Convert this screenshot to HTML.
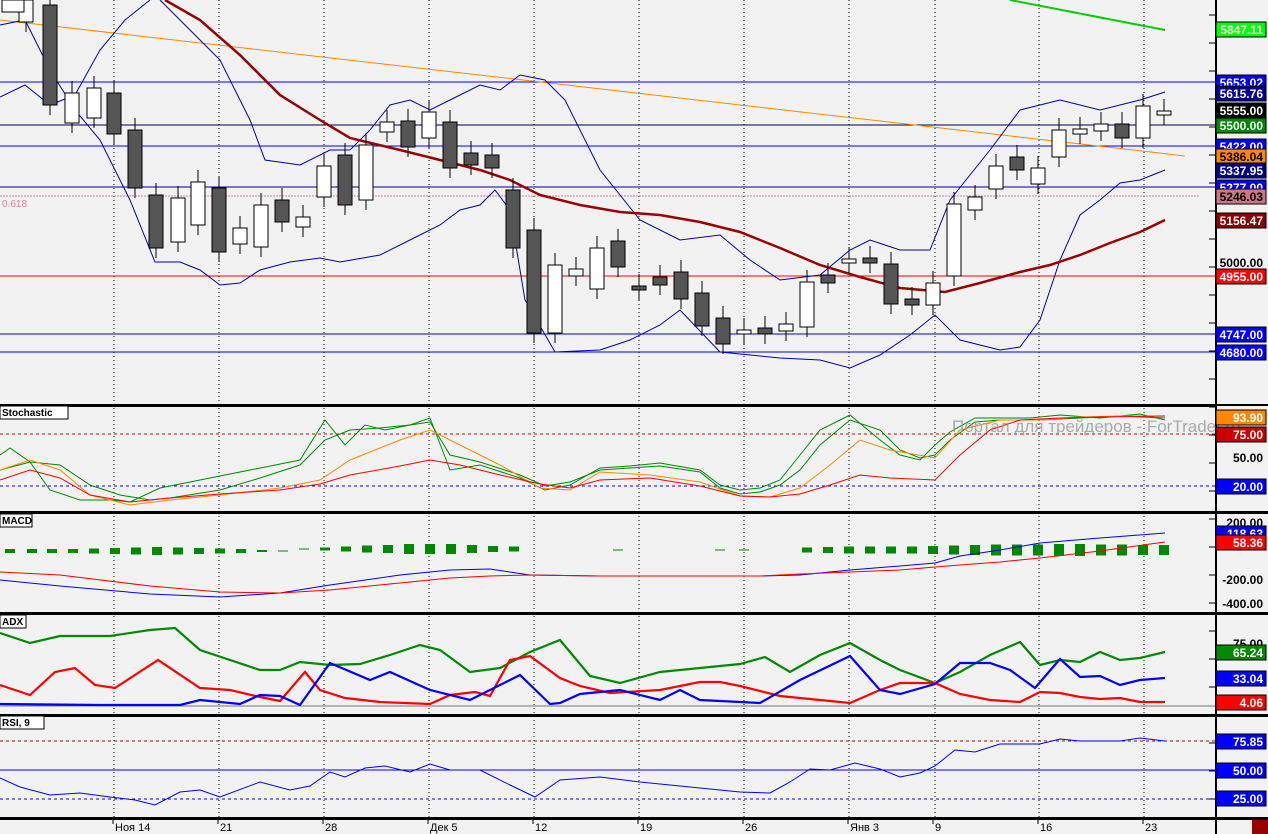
<!DOCTYPE html>
<html><head><meta charset="utf-8"><style>
body{margin:0;background:#f2f2f2;}
svg{display:block;font-family:"Liberation Sans",sans-serif;}
.l{font:bold 12px "Liberation Sans",sans-serif;fill:#fff;}
.k{font:bold 12px "Liberation Sans",sans-serif;fill:#000;}
</style></head><body>
<svg id="s" width="1268" height="834" xmlns="http://www.w3.org/2000/svg"></svg>
<script>
var o='';
function P(pts,c,w,d){o+='<polyline fill="none" stroke="'+c+'" stroke-width="'+(w||1)+'"'+(d?' stroke-dasharray="'+d+'"':'')+' points="'+pts+'"/>';}
function L(x1,y1,x2,y2,c,w,d){o+='<line x1="'+x1+'" y1="'+y1+'" x2="'+x2+'" y2="'+y2+'" stroke="'+c+'" stroke-width="'+(w||1)+'"'+(d?' stroke-dasharray="'+d+'"':'')+'/>';}
function R(x,y,w,h,f,s){o+='<rect x="'+x+'" y="'+y+'" width="'+w+'" height="'+h+'" fill="'+f+'"'+(s?' stroke="'+s+'"':'')+'/>';}
function T(x,y,t,c,cls){o+='<text x="'+x+'" y="'+y+'" class="'+(cls||'l')+'"'+(c?' style="fill:'+c+'"':'')+'>'+t+'</text>';}
function lab(y,t,bg,fg){R(1216,y-8,50,15,bg,'#000');o+='<text x="1263" y="'+(y+4)+'" text-anchor="end" class="l"'+(fg?' style="fill:'+fg+'"':'')+'>'+t+'</text>';}
function num(y,t){o+='<text x="1263" y="'+(y+4)+'" text-anchor="end" class="k">'+t+'</text>';}
R(0,0,1268,834,'#f2f2f2');
var vx=[114,219,324,429,534,639,744,849,935,1039,1144];
vx.forEach(function(x){L(x,0,x,818,'#000',1,'1 3');});
L(0,82,1215,82,'#00f');L(0,125,1215,125,'#004');L(0,146,1215,146,'#00f');L(0,187,1215,187,'#008');
L(0,196,1200,196,'#e08090',1,'2 1');L(0,276,1215,276,'#f00');L(0,334,1215,334,'#00f');L(0,352,1215,352,'#00f');
o+='<text x="2" y="207" style="fill:#e08090;font-size:10px">0.618</text>';
L(0,20,1185,156,'#f80');L(1010,0,1165,30,'#0c0',2);
P('0,97 25,85 50,105 75,95 100,50 125,20 150,0','#00a');
P('160,0 190,30 220,60 250,120 265,160 300,165 330,150 350,150 370,130 390,105 410,100 430,110 450,100 480,85 500,90 520,75 545,80 565,100 600,170 640,220 680,240 720,235 750,260 780,280 820,275 850,250 870,240 900,250 930,250 950,200 990,150 1020,110 1060,100 1100,110 1140,100 1165,92','#00a');
P('0,25 25,20 50,70 75,110 100,140 130,200 155,262 180,262 200,270 220,285 240,283 260,270 290,262 320,258 340,262 380,255 410,240 440,225 460,210 480,205 495,190 510,210 525,300 555,352 600,350 630,340 660,325 680,310 720,352 780,358 820,360 850,368 880,355 910,335 935,315 960,340 980,345 1000,350 1020,347 1040,320 1060,260 1080,215 1100,200 1120,183 1140,180 1165,170','#00a');
P('165,0 200,20 240,55 280,95 320,120 350,138 400,150 440,160 480,170 510,180 540,195 580,205 620,212 660,215 700,222 740,232 780,248 820,265 860,277 900,288 945,292 980,283 1020,272 1050,265 1080,255 1110,243 1140,232 1165,220','#900',2.5);
var c=[[26,0,22,0],[50,5,105,1],[72,93,123,0],[94,88,118,0],[114,93,134,1],[135,130,188,1],[156,195,248,1],[178,198,242,0],[198,182,225,0],[219,188,252,1],[240,228,244,0],[261,205,247,0],[282,200,222,1],[303,217,227,0],[324,166,197,0],[345,155,205,1],[366,145,200,0],[387,122,132,0],[408,121,147,1],[429,112,138,0],[450,122,168,1],[471,153,165,1],[492,155,168,1],[513,190,248,1],[534,230,333,1],[555,265,333,0],[576,269,276,0],[597,248,289,0],[618,241,267,1],[639,286,290,1],[660,277,285,1],[681,272,299,1],[702,293,326,1],[723,318,344,1],[744,330,334,0],[765,328,334,1],[786,324,331,0],[807,282,327,0],[828,275,283,1],[849,259,263,0],[870,258,263,1],[891,264,304,1],[912,299,305,1],[933,283,305,0],[954,204,276,0],[975,197,210,0],[996,166,189,0],[1017,157,170,1],[1038,168,184,0],[1059,130,157,0],[1080,129,134,0],[1101,124,131,0],[1122,124,138,1],[1143,106,138,0],[1164,111,115,0]];
c.forEach(function(k){L(k[0],k[1]-12,k[0],k[2]+10,'#000');R(k[0]-7,k[1],14,Math.max(2,k[2]-k[1]),k[3]?'#555':'#fff','#000');});
[405,512,613,715,818].forEach(function(y){R(0,y-1,1268,3,'#000');});
R(1215,0,2,834,'#000');
L(0,434,1215,434,'#d00',1,'3 3');L(0,486,1215,486,'#00f',1,'3 3');
P('0,455 10,448 30,462 50,490 80,500 110,500 130,502 160,488 200,480 250,470 300,460 325,420 345,445 365,425 385,430 410,425 430,418 450,470 480,465 520,478 545,490 570,485 600,468 630,466 660,463 700,470 720,485 740,490 760,488 780,480 800,455 820,430 850,415 880,440 900,455 920,460 935,445 950,432 975,418 1000,418 1030,418 1060,415 1100,418 1140,414 1165,420','#080');
P('0,470 30,462 60,465 90,485 120,495 150,500 170,498 220,490 260,478 300,465 325,440 350,430 380,428 410,425 430,422 450,455 480,462 520,475 545,486 570,482 600,470 630,468 660,466 700,472 720,488 740,494 760,492 780,485 800,470 820,445 850,420 880,430 900,450 920,458 935,455 950,440 975,422 1000,420 1040,420 1080,418 1120,416 1165,418','#080');
P('0,470 30,460 60,470 90,495 130,505 170,500 220,495 280,488 320,480 350,460 400,440 430,430 460,445 500,465 540,488 570,490 600,472 650,475 700,482 740,496 770,497 800,488 830,465 860,440 890,450 935,458 960,430 1000,420 1040,420 1080,417 1120,416 1165,416','#f80');
P('0,480 30,470 60,478 90,495 130,502 170,498 220,494 280,490 320,484 350,475 400,466 430,460 460,465 500,475 540,484 570,488 600,480 650,478 700,486 740,496 770,497 800,494 830,485 860,475 890,478 935,480 960,455 990,430 1020,420 1060,418 1100,417 1165,416','#f00');
o+='<text x="952" y="432" style="font-size:17px;fill:#999;opacity:.8">Портал для трейдеров - ForTrader.ru</text>';
R(1217,406,51,6,'#f2f2f2');
var bx=[10,32,52,73,94,115,136,157,178,199,220,241,262,283,304,325,346,367,388,409,430,451,472,493,514];
var bh=[4,4,4,4,5,6,7,8,7,6,5,4,2,1,1,3,5,7,8,10,10,10,8,6,5];
bx.forEach(function(x,i){R(x-5,551-bh[i]/2+ (i<14?0:-2),10,bh[i],'#080');});
[[618,1],[720,1],[744,1],[807,5],[828,6],[849,7],[870,7],[891,7],[912,7],[933,8],[954,9],[975,10],[996,11],[1017,11],[1038,11],[1059,12],[1080,12],[1101,11],[1122,11],[1143,10],[1164,10]].forEach(function(b){R(b[0]-5,546-b[1]/2+4,10,b[1],'#080');});
P('0,580 60,586 150,594 220,597 280,593 330,585 400,575 450,570 490,569 530,575 600,576 680,576 760,576 800,575 850,570 900,566 935,563 960,556 1000,550 1040,543 1100,538 1165,533','#00f');
P('0,572 60,575 150,586 220,592 280,593 330,590 400,583 450,578 490,576 530,575 600,576 680,576 760,576 800,574 850,572 900,570 935,567 960,565 1000,562 1040,558 1100,551 1165,542','#f00');
L(0,706,1215,706,'#777');
P('0,633 30,643 60,636 110,636 150,630 175,628 200,650 230,660 260,670 280,670 300,662 330,665 360,664 390,655 420,645 440,650 470,672 500,668 530,652 560,640 590,676 620,683 660,672 700,668 740,664 765,657 790,672 820,655 850,643 880,660 900,670 935,683 960,672 990,655 1020,642 1040,665 1060,660 1080,662 1100,652 1120,660 1140,658 1165,652','#080',2.2);
P('0,685 30,695 55,672 75,668 95,685 115,688 158,660 200,688 230,690 260,697 280,701 305,672 320,690 345,698 380,702 430,704 450,695 475,692 490,696 510,660 530,656 560,678 580,686 610,693 660,690 700,682 720,682 740,686 780,696 820,700 850,703 880,690 900,683 935,683 960,694 990,700 1020,702 1040,692 1060,693 1080,697 1100,699 1120,698 1140,702 1165,702','#f00',2.2);
P('0,704 100,705 180,705 200,700 240,704 260,695 280,696 300,705 330,663 370,680 390,672 430,690 470,700 520,675 550,704 560,703 580,694 620,690 660,700 680,690 700,700 760,703 800,680 850,656 880,690 900,694 935,684 960,663 990,663 1010,670 1035,688 1060,659 1080,677 1100,676 1120,685 1140,680 1165,678','#00f',2.2);
L(0,741,1215,741,'#b00',1,'3 3');L(0,770,1215,770,'#00f');L(0,799,1215,799,'#00f',1,'3 3');
P('0,778 20,787 50,795 80,793 110,797 135,800 155,805 180,792 200,790 220,797 260,782 290,790 310,786 330,772 345,777 365,768 385,766 410,772 430,764 450,770 480,770 510,785 535,797 560,780 600,777 640,782 690,787 740,792 770,793 790,782 810,769 830,770 855,763 880,769 900,777 920,773 935,766 955,750 975,752 1000,744 1040,744 1060,739 1080,741 1120,741 1140,738 1165,741','#00f');
function tag(x,y,t){R(x,y,t.length*6+8,13,'#fff','#000');o+='<text x="'+(x+2)+'" y="'+(y+10)+'" style="font:bold 10px Liberation Sans,sans-serif">'+t+'</text>';}
tag(0,406,'Stochastic');tag(0,514,'MACD');tag(0,615,'ADX');tag(0,716,'RSI, 9');
R(2,0,22,12,'#fff','#000');
for(var y=15;y<818;y+=28)L(1209,y,1215,y,'#000');
lab(30,'5847.11','#0f0');lab(83,'5653.02','#00f');lab(94,'5615.76','#008');lab(111,'5555.00','#000');lab(126,'5500.00','#080');
lab(147,'5422.00','#00f');lab(157,'5386.04','#f80','#000');lab(171,'5337.95','#008');lab(188,'5277.00','#00f');lab(197,'5246.03','#c78','#000');
lab(221,'5156.47','#800');num(263,'5000.00');lab(277,'4955.00','#f00');lab(335,'4747.00','#00f');lab(353,'4680.00','#00f');
lab(418,'93.90','#f80');lab(435,'75.00','#c00');num(458,'50.00');lab(487,'20.00','#00f');
num(523,'200.00');lab(534,'118.63','#00f');lab(543,'58.36','#f00');num(580,'-200.00');num(604,'-400.00');
num(644,'75.00');lab(653,'65.24','#080');lab(679,'33.04','#00f');lab(703,'4.06','#f00');
lab(742,'75.85','#00f');lab(771,'50.00','#00f');lab(799,'25.00','#00f');
[[115,'Ноя 14'],[220,'21'],[325,'28'],[430,'Дек 5'],[535,'12'],[640,'19'],[745,'26'],[850,'Янв 3'],[935,'9'],[1040,'16'],[1145,'23']].forEach(function(d){L(d[0]-2,818,d[0]-2,824,'#000');o+='<text x="'+d[0]+'" y="831" style="font-size:11px">'+d[1]+'</text>';});
R(1252,820,16,14,'#900');
document.getElementById('s').innerHTML=o;
</script>
</body></html>
